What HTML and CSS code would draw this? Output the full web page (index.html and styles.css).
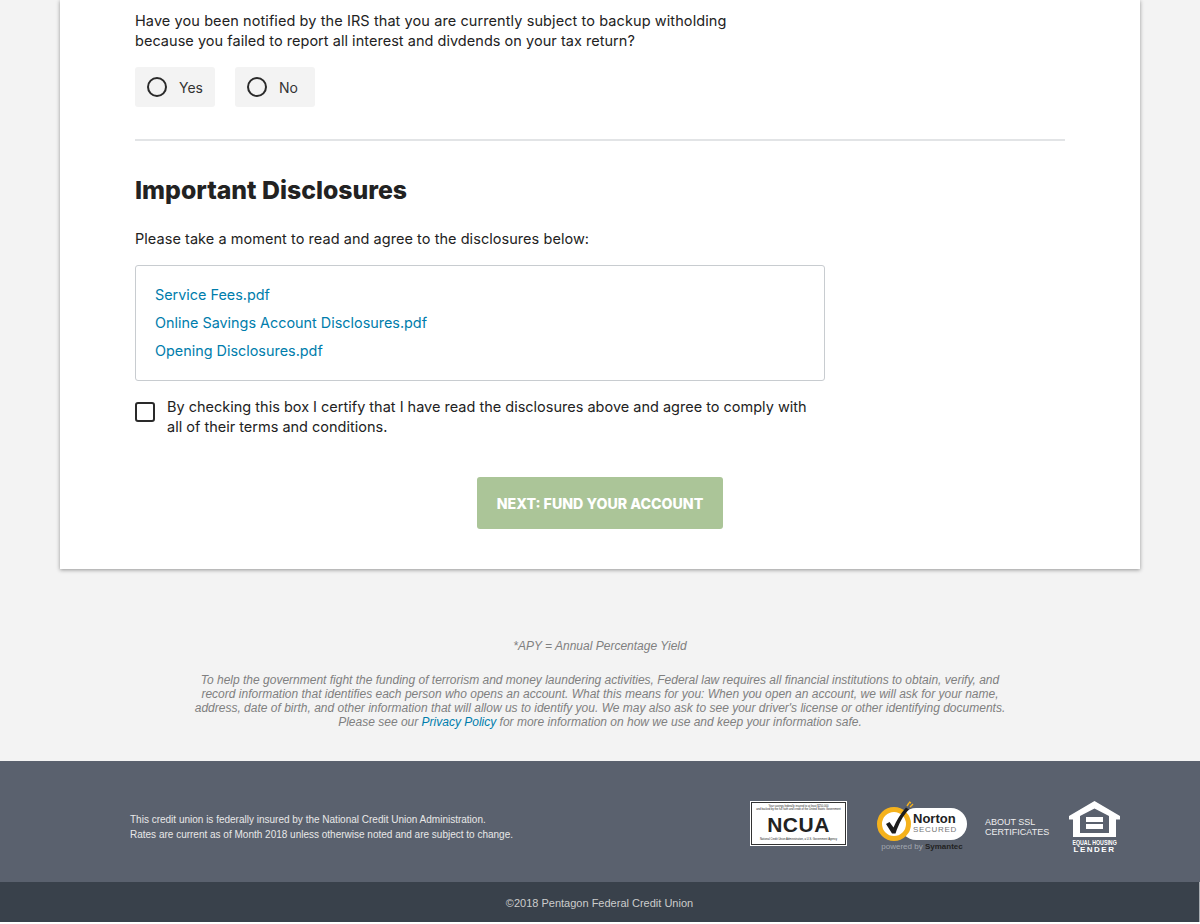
FILE: index.html
```html
<!DOCTYPE html>
<html lang="en">
<head>
<meta charset="utf-8">
<title>Important Disclosures</title>
<link rel="stylesheet" href="styles.css">
</head>
<body>
<main class="card">
  <p class="question">Have you been notified by the IRS that you are currently subject to backup witholding<br><span class="question-end">because you failed to report all interest and divdends on your tax return?</span></p>
  <div class="choices">
    <label class="choice"><span class="radio"></span>Yes</label>
    <label class="choice"><span class="radio"></span>No</label>
  </div>
  <hr class="rule">
  <h2 class="heading">Important Disclosures</h2>
  <p class="intro">Please take a moment to read and agree to the disclosures below:</p>
  <div class="docs">
    <a href="#">Service Fees.pdf</a>
    <a href="#">Online Savings Account Disclosures.pdf</a>
    <a href="#">Opening Disclosures.pdf</a>
  </div>
  <label class="agree"><span class="box"></span><span>By checking this box I certify that I have read the disclosures above and agree to comply with all of their terms and conditions.</span></label>
  <div class="actions"><button class="next" type="button">NEXT: FUND YOUR ACCOUNT</button></div>
</main>
<section class="notes">
  <p class="apy">*APY = Annual Percentage Yield</p>
  <p class="law">To help the government fight the funding of terrorism and money laundering activities, Federal law requires all financial institutions to obtain, verify, and<br>record information that identifies each person who opens an account. What this means for you: When you open an account, we will ask for your name,<br>address, date of birth, and other information that will allow us to identify you. We may also ask to see your driver's license or other identifying documents.<br>Please see our <a href="#">Privacy Policy</a> for more information on how we use and keep your information safe.</p>
</section>
<footer class="footer">
  <div class="footer-main">
    <p class="insured">This credit union is federally insured by the National Credit Union Administration.<br>Rates are current as of Month 2018 unless otherwise noted and are subject to change.</p>
    <div class="badges">
      <div class="ncua">
        <span class="ncua-small">Your savings federally insured to at least $250,000<br>and backed by the full faith and credit of the United States Government</span>
        <span class="ncua-name">NCUA</span>
        <span class="ncua-small">National Credit Union Administration, a U.S. Government Agency</span>
      </div>
      <div class="norton">
        <div class="norton-seal">
          <div class="norton-pill">
            <span class="norton-name">Norton</span>
            <span class="norton-sec">SECURED</span>
          </div>
          <svg class="norton-mark" viewBox="0 0 42 44" width="42" height="44" aria-hidden="true">
            <circle cx="18" cy="24" r="14.5" fill="#fff" stroke="#f5b21c" stroke-width="5"/>
            <path d="M10 24l3.500-2 4 5.500c3-7 7-14 12.500-20l3 2c-6 6-10 14-13.500 24h-3.500z" fill="#1c1c1c"/>
            <path d="M31 6l2-3M34 7l3-3M33 2l2 1" stroke="#f5b21c" stroke-width="1.400"/>
          </svg>
        </div>
        <span class="norton-by">powered by <b>Symantec</b></span>
      </div>
      <a class="ssl" href="#">ABOUT SSL<br>CERTIFICATES</a>
      <div class="ehl">
        <svg viewBox="0 0 51 36" width="51" height="36" aria-hidden="true">
          <path fill-rule="evenodd" d="M25.500 0L51 15v3.500h-4V36H4V18.500H0V15zM11 15v17h29V15L25.500 7.500z" fill="#fff"/>
          <path d="M17 16h17v5H17zM17 23h17v5H17z" fill="#fff"/>
        </svg>
        <span class="ehl-top">EQUAL HOUSING</span>
        <span class="ehl-bottom">LENDER</span>
      </div>
    </div>
  </div>
  <div class="footer-bar">©2018 Pentagon Federal Credit Union</div>
</footer>
</body>
</html>
```
FILE: styles.css
```css
* { box-sizing: border-box; }
html { margin: 0; background: #fff; }
body {
  margin: 0;
  background: #f3f3f3;
  color: #222;
  font-family: "Inter", "Liberation Sans", sans-serif;
}
p { margin: 0; }
.card {
  width: 1080px;
  height: 569px;
  margin: 0 auto;
  padding: 11px 75px 0;
  background: #fff;
  box-shadow: 0 1px 4px rgba(0, 0, 0, .4);
}
.question, .intro, .agree { font-size: 14.5px; line-height: 20px; color: #222; }
.question { letter-spacing: .09px; }
.question-end { letter-spacing: .035px; }
.intro { letter-spacing: .05px; }
.choices { display: flex; gap: 20px; margin-top: 16px; }
.choice {
  display: flex;
  align-items: center;
  width: 80px;
  height: 40px;
  padding-left: 12px;
  border-radius: 3px;
  background: #f3f3f3;
  font-size: 14px;
  color: #333;
}
.radio {
  width: 20px;
  height: 20px;
  margin-right: 12px;
  border: 2px solid #2a2a2a;
  border-radius: 50%;
}
.rule { height: 2px; margin: 32px 0 0; border: 0; background: #e2e4e6; }
.heading { margin: 33px 0 0; font-size: 24.8px; line-height: 32px; font-weight: 800; color: #222; }
.intro { margin-top: 23px; }
.docs {
  display: flex;
  flex-direction: column;
  gap: 8px;
  width: 690px;
  height: 116px;
  margin-top: 16px;
  padding: 19px 19px 0;
  border: 1px solid #c8ccd0;
  border-radius: 3px;
}
.docs a { font-size: 14.4px; line-height: 20px; color: #007dac; text-decoration: none; }
.agree { display: flex; gap: 12px; width: 690px; margin-top: 16px; }
.box {
  flex: none;
  width: 20px;
  height: 20px;
  margin-top: 5px;
  border: 2px solid #2a2a2a;
  border-radius: 3px;
}
.actions { display: flex; justify-content: center; margin-top: 40px; }
.next {
  width: 246px;
  height: 52px;
  padding: 0;
  border: 0;
  border-radius: 3px;
  background: #abc598;
  color: #fff;
  font: 800 14.2px "Inter", "Liberation Sans", sans-serif;
}
.notes {
  height: 192px;
  padding-top: 70px;
  text-align: center;
  color: #808080;
  font: italic 12px/14px "Liberation Sans", Arial, sans-serif;
}
.law { margin-top: 20px; }
.law a { color: #007dac; text-decoration: none; }
.footer { color: #fff; font-family: "Liberation Sans", Arial, sans-serif; }
.footer-main {
  display: flex;
  align-items: center;
  justify-content: space-between;
  height: 121px;
  padding: 0 80px 0 130px;
  background: #5a616e;
}
.insured { padding-top: 10px; font-size: 10px; line-height: 15px; color: #e8e8e8; }
.badges { display: flex; align-items: center; padding-top: 10px; }
.ncua {
  display: flex;
  flex-direction: column;
  align-items: center;
  justify-content: space-between;
  width: 97px;
  height: 45px;
  margin-right: 30px;
  margin-bottom: 6px;
  padding: 5px 1px 5px;
  background: #fff;
  outline: 1px solid #333;
  outline-offset: -2px;
  color: #222;
}
.ncua-small { font-size: 2.7px; line-height: 2.5px; text-align: center; white-space: nowrap; }
.ncua-name { font-size: 21px; line-height: 18px; font-weight: 700; letter-spacing: .5px; }
.norton { display: flex; flex-direction: column; align-items: center; width: 90px; margin-right: 18px; }
.norton-seal { position: relative; width: 90px; height: 38px; padding: 6px 0 0 23px; }
.norton-mark { position: absolute; left: -1px; top: -2px; }
.norton-pill {
  display: flex;
  flex-direction: column;
  justify-content: center;
  width: 67px;
  height: 32px;
  padding-left: 13px;
  border-radius: 16px;
  background: #fff;
  color: #222;
}
.norton-name { font-size: 13px; line-height: 13px; font-weight: 700; }
.norton-sec { font-size: 8px; line-height: 10px; letter-spacing: .7px; color: #777; }
.norton-by { margin-top: 2px; font-size: 8px; line-height: 10px; color: #a3a8b0; white-space: nowrap; }
.norton-by b { color: #222; }
.ssl { width: 84px; font-size: 9px; line-height: 10px; color: #eee; text-decoration: none; }
.ehl { display: flex; flex-direction: column; align-items: center; width: 51px; }
.ehl-top { margin-top: 2px; font-size: 7.5px; line-height: 7px; font-weight: 700; white-space: nowrap; transform: scaleX(.7); }
.ehl-bottom { font-size: 8px; line-height: 7px; font-weight: 700; letter-spacing: 1.5px; }
.footer-bar {
  height: 40px;
  padding-top: 14px;
  border-right: 1px solid #a9adb2;
  background: #39414b;
  text-align: center;
  font-size: 11px;
  line-height: 14px;
  color: #ccc;
}
```
